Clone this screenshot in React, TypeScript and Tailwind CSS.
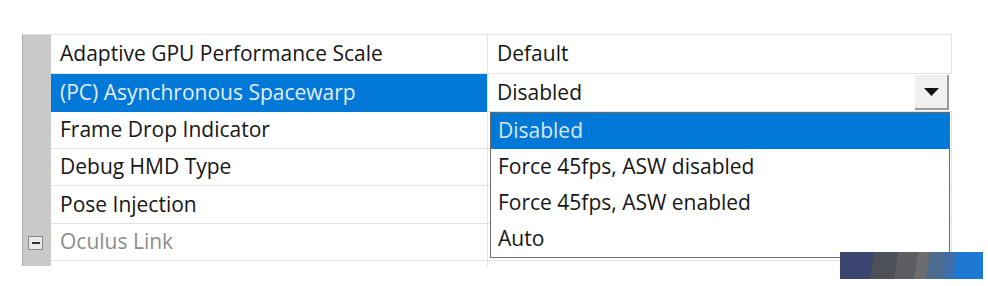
import React from 'react';

const rows = [
  { label: 'Adaptive GPU Performance Scale', value: 'Default', h: 'h-[39px]' },
  { label: '(PC) Asynchronous Spacewarp', value: 'Disabled', selected: true, h: 'h-[38px]' },
  { label: 'Frame Drop Indicator', value: '', h: 'h-[37px]' },
  { label: 'Debug HMD Type', value: '', h: 'h-[37px]' },
  { label: 'Pose Injection', value: '', h: 'h-[38px]' },
  { label: 'Oculus Link', value: '', category: true, h: 'h-[37px]' },
];

const options = ['Disabled', 'Force 45fps, ASW disabled', 'Force 45fps, ASW enabled', 'Auto'];

function MinusBox() {
  return (
    <div className="w-[15px] h-[14px] mr-[3px] border border-[#8a8a8a] bg-[#e9e9e9] flex items-center justify-center">
      <div className="w-[8px] h-[2px] bg-[#333]" />
    </div>
  );
}

function Strip() {
  // blurry coloured band in the lower right corner
  return (
    <svg width="143" height="27" viewBox="0 0 143 27" className="block">
      <rect x="0" y="0" width="143" height="27" fill="#3b4670" />
      <polygon points="34,0 60,0 56,27 30,27" fill="#4e5059" />
      <polygon points="58,0 80,0 76,27 54,27" fill="#5d5e64" />
      <polygon points="78,0 92,0 88,27 74,27" fill="#6b6d6f" />
      <polygon points="90,0 108,0 104,27 86,27" fill="#4d6c8f" />
      <polygon points="106,0 118,0 114,27 102,27" fill="#3f6fa6" />
      <polygon points="116,0 143,0 143,27 112,27" fill="#1c78d2" />
    </svg>
  );
}

export default function App() {
  return (
    <div
      className="w-[988px] h-[286px] bg-white relative overflow-hidden text-[21px] text-[#161616]"
      style={{ fontFamily: '"Open Sans", "Noto Sans", sans-serif' }}
    >
      <div className="pt-[34px] pl-[22px]">
        <div className="relative w-[930px] border-t border-[#e3e3e3]">
          {rows.map((r, i) => (
            <div key={i} className={`flex ${r.h}`}>
              <div className="w-[29px] shrink-0 bg-[#c9c9c9] border-l border-[#a9a9a9] flex items-center justify-center">
                {r.category && <MinusBox />}
              </div>
              <div
                className={`w-[436px] shrink-0 flex items-center pl-[9px] border-b ${
                  r.selected ? 'bg-[#0078d7] text-[#e4eefa] border-[#0078d7]' : 'border-[#e3e3e3]'
                } ${r.category ? 'text-[#8c8c8c]' : ''}`}
              >
                {r.label}
              </div>
              <div className="w-[1px] shrink-0 bg-[#e3e3e3]" />
              {r.selected ? (
                <div className="flex-1 flex items-center border-b border-[#e3e3e3]">
                  <div className="flex-1 h-full flex items-center pl-[9px] bg-white">{r.value}</div>
                  <div className="w-[34px] h-[35px] mr-[3px] bg-[#f0f0f0] border-r-2 border-b-2 border-[#9a9a9a] flex items-center justify-center">
                    <svg width="15" height="8" viewBox="0 0 15 8">
                      <polygon points="0,0 15,0 7.5,8" fill="#111" />
                    </svg>
                  </div>
                </div>
              ) : (
                <div className="flex-1 flex items-center pl-[9px] border-b border-r border-[#e3e3e3]">
                  {r.value}
                </div>
              )}
            </div>
          ))}
          <div className="flex h-[5px]">
            <div className="w-[29px] bg-[#c9c9c9] border-l border-[#a9a9a9]" />
            <div className="w-[436px]" />
            <div className="w-[1px] bg-[#e3e3e3]" />
          </div>

          {/* open dropdown list */}
          <div className="absolute left-[468px] top-[77px] w-[460px] border border-[#6b6b6b] bg-white">
            {options.map((o, i) => (
              <div
                key={o}
                className={`h-[36px] flex items-center pl-[7px] ${i === 0 ? 'bg-[#0078d7] text-[#d8e8f8]' : ''}`}
              >
                {o}
              </div>
            ))}
          </div>
        </div>
      </div>

      <div className="absolute left-[840px] top-[252px]">
        <Strip />
      </div>
    </div>
  );
}
